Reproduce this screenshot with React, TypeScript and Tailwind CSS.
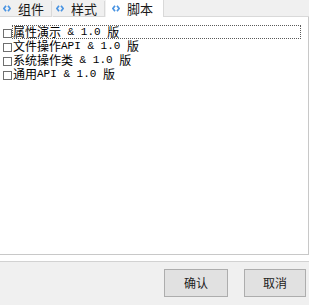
import React from "react";

type Tab = { label: string; active?: boolean };

const tabs: Tab[] = [{ label: "组件" }, { label: "样式" }, { label: "脚本", active: true }];

const scripts = ["属性演示 & 1.0 版", "文件操作API & 1.0 版", "系统操作类 & 1.0 版", "通用API & 1.0 版"];

function CodeIcon() {
  return (
    <svg width="8" height="7" viewBox="0 0 8 7" className="shrink-0">
      <polyline points="3,0.8 0.9,3.5 3,6.2" fill="none" stroke="#4a94e2" strokeWidth="1.7" />
      <polyline points="5,0.8 7.1,3.5 5,6.2" fill="none" stroke="#4a94e2" strokeWidth="1.7" />
    </svg>
  );
}

// split into ascii / cjk runs so each gets its own font
function runs(text: string) {
  const out: { t: string; ascii: boolean }[] = [];
  for (const ch of text) {
    const ascii = ch.charCodeAt(0) < 128;
    const last = out[out.length - 1];
    if (last && last.ascii === ascii) last.t += ch;
    else out.push({ t: ch, ascii });
  }
  return out;
}

function ScriptRow({ text, focused }: { text: string; focused?: boolean }) {
  return (
    <div className="flex items-center h-[14px]">
      <span className="ml-[3px] w-[9px] h-[9px] border border-[#6f6f6f] shrink-0 mt-[2px]" />
      <div
        className={`flex-1 h-[14px] flex items-center border leading-none ${
          focused ? "border-dotted border-[#5a5a5a]" : "border-transparent"
        }`}
      >
        {runs(text).map((r, i) =>
          r.ascii ? (
            <span key={i} className="text-[11px] leading-[12px] whitespace-pre font-['Liberation_Mono',monospace]">
              {r.t}
            </span>
          ) : (
            <span key={i} className="text-[12px] leading-[12px] font-['Noto_Sans_CJK_SC',sans-serif]">
              {r.t}
            </span>
          )
        )}
      </div>
    </div>
  );
}

export default function App() {
  return (
    <div className="w-[309px] h-[305px] bg-[#f0f0f0] flex flex-col text-[#1a1a1a] font-['Noto_Sans_CJK_SC',sans-serif] overflow-hidden">
      {/* Tabs */}
      <div className="flex items-end h-[17px]">
        {tabs.map((t) =>
          t.active ? (
            <div
              key={t.label}
              className="h-[17px] w-[58px] bg-white border-r border-[#d9d9d9] flex items-center gap-[7px] pl-[6px] text-[13px] leading-none"
            >
              <CodeIcon />
              {t.label}
            </div>
          ) : (
            <div
              key={t.label}
              className="h-[16px] w-[52px] bg-[#f0f0f0] border-r border-b border-[#d9d9d9] flex items-center gap-[7px] pl-[3px] text-[13px] leading-none mr-[1px]"
            >
              <CodeIcon />
              {t.label}
            </div>
          )
        )}
        <div className="flex-1 h-[17px] border-b border-[#d9d9d9]" />
      </div>

      {/* Script list */}
      <div className="h-[238px] bg-white border-r border-b border-[#c8c8c8] pt-[8px] pr-[7px] text-black">
        {scripts.map((s, i) => (
          <ScriptRow key={s} text={s} focused={i === 0} />
        ))}
      </div>
      <div className="h-[6px] bg-white" />

      {/* Footer buttons */}
      <div className="flex-1 border-t border-[#d2d2d2] flex justify-end items-start gap-[16px] pt-[7px] pr-[3px]">
        <button className="w-[64px] h-[28px] bg-[#e1e1e1] border border-[#adadad] text-[12px] text-[#222]">
          确认
        </button>
        <button className="w-[62px] h-[28px] bg-[#e1e1e1] border border-[#adadad] text-[12px] text-[#222]">
          取消
        </button>
      </div>
    </div>
  );
}
